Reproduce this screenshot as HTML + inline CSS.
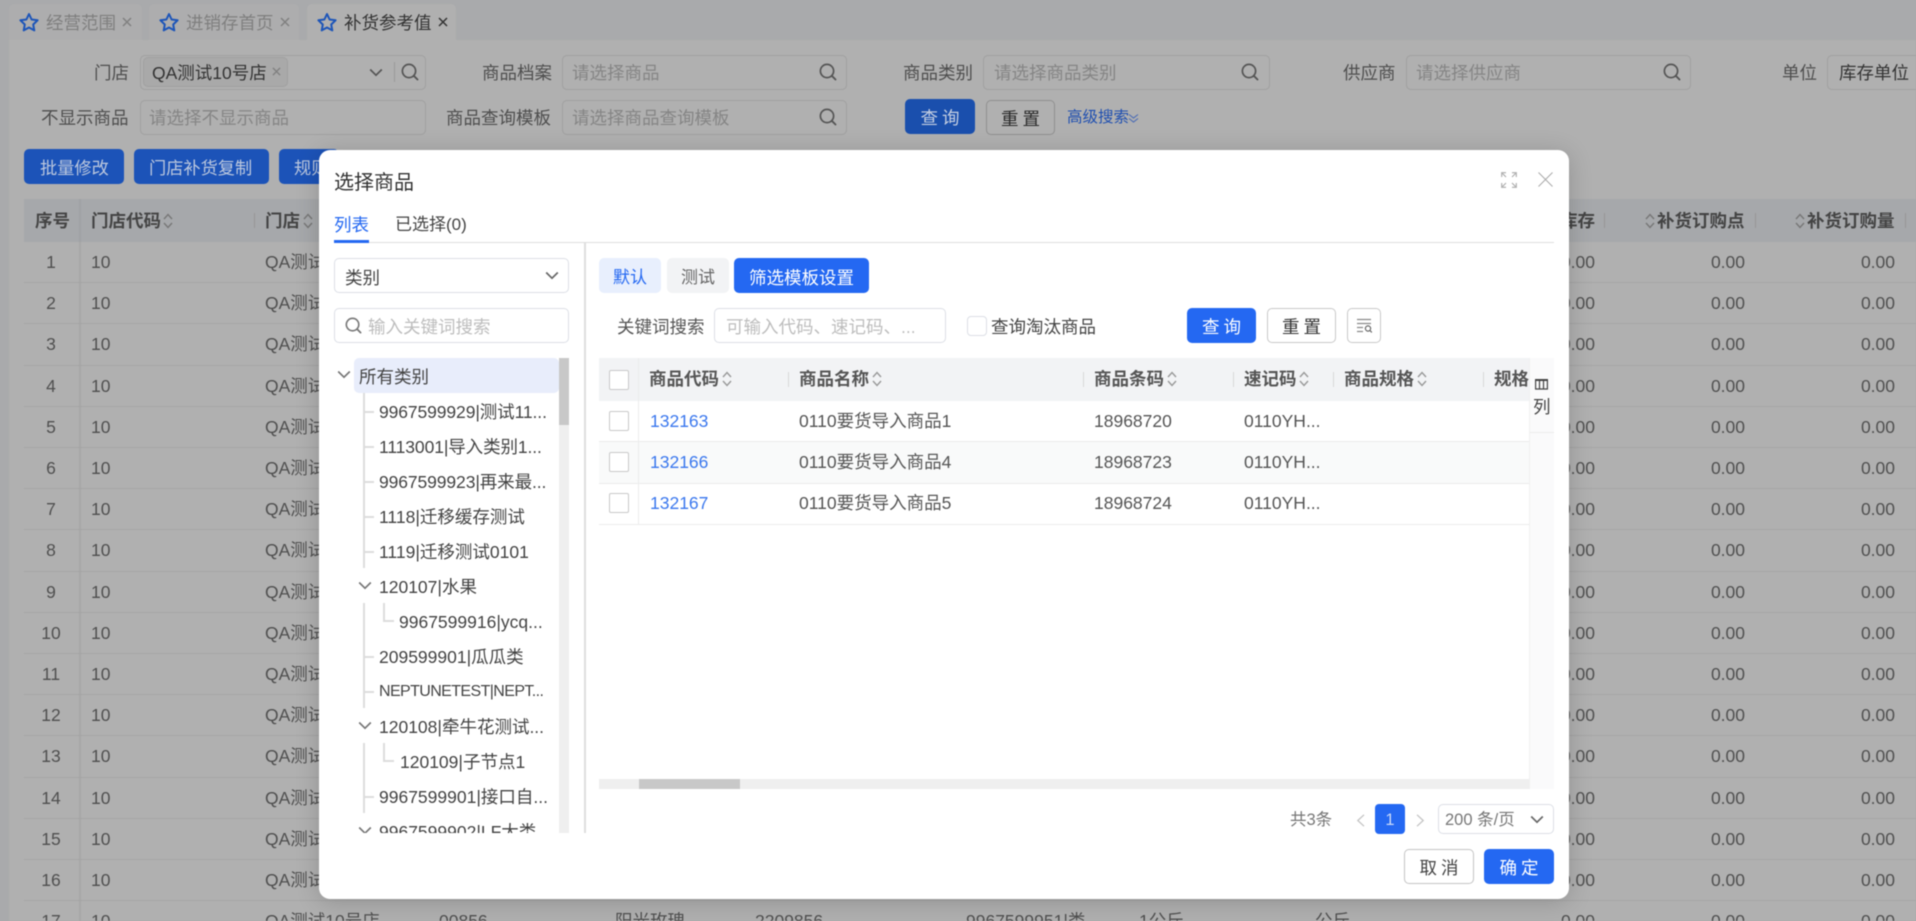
<!DOCTYPE html>
<html lang="zh-CN">
<head>
<meta charset="utf-8">
<title>补货参考值</title>
<style>
html,body{margin:0;padding:0;width:1916px;height:921px;overflow:hidden;background:#a9aaac}
#root{position:absolute;left:0;top:0;width:1916px;height:921px;overflow:hidden;filter:blur(.4px);font-family:"Liberation Sans","Noto Sans CJK SC",sans-serif;font-size:17.5px;color:#4e4e4e}
.b{position:absolute;box-sizing:border-box}
.t{position:absolute;white-space:nowrap;line-height:24px;height:24px}
svg{position:absolute;overflow:visible}
.inp{position:absolute;box-sizing:border-box;border:1.5px solid #a0a0a0;border-radius:5px;height:35px}
.ph{color:#858585}
.lab{color:#4e4e4e}
.bd{font-weight:700}
.r{position:absolute;left:24px;width:1892px;height:41.2px;box-sizing:border-box;border-bottom:1.5px solid #a5a5a5}
.r .t{top:8px;color:#505050}
.r i{position:absolute;left:55px;top:0;bottom:0;width:1.5px;background:#a7a7a7}
.n{text-align:center;width:54px;left:0}
.v{text-align:right;width:100px}
.mi{border:1.5px solid #dcdfe6;border-radius:5px;position:absolute;box-sizing:border-box;background:#fff}
.tr{color:#444}
.tl{position:absolute;background:#dcdcdc}
.cb{position:absolute;box-sizing:border-box;width:20px;height:20px;border:1.5px solid #c9c9c9;border-radius:2px;background:#fff}
.cell{color:#555}
</style>
</head>
<body>
<div id="root">
<svg width="0" height="0" style="position:absolute">
<defs>
<symbol id="star" viewBox="0 0 20 20"><path d="M10 2 12.6 7.5 18.6 8.3 14.2 12.5 15.3 18.4 10 15.5 4.7 18.4 5.8 12.5 1.4 8.3 7.4 7.5Z" fill="none" stroke="#1d55b8" stroke-width="2" stroke-linejoin="round"/></symbol>
<symbol id="sr" viewBox="0 0 18 18"><circle cx="8" cy="8" r="6.6" fill="none" stroke="currentColor" stroke-width="1.7"/><path d="M12.8 12.8 16.5 16.5" stroke="currentColor" stroke-width="1.9" fill="none" stroke-linecap="round"/></symbol>
<symbol id="sort" viewBox="0 0 10 18"><path d="M1 7 5 2.5 9 7M1 11 5 15.5 9 11" fill="none" stroke="currentColor" stroke-width="1.4"/></symbol>
<symbol id="chev" viewBox="0 0 14 9"><path d="M1.2 1.5 7 7.2 12.8 1.5" fill="none" stroke="currentColor" stroke-width="1.7"/></symbol>
<symbol id="x" viewBox="0 0 10 10"><path d="M1 1 9 9M9 1 1 9" fill="none" stroke="currentColor" stroke-width="1.5"/></symbol>
</defs>
</svg>

<!-- page background -->
<div class="b" style="left:9px;top:40px;width:1907px;height:881px;background:#b0b0b0"></div>
<div class="b" style="left:9px;top:4px;width:133px;height:36px;background:#adadae;border-radius:5px 5px 0 0"></div>
<div class="b" style="left:149px;top:4px;width:150px;height:36px;background:#adadae;border-radius:5px 5px 0 0"></div>
<div class="b" style="left:307px;top:4px;width:149px;height:36px;background:#b0b0b0;border-radius:5px 5px 0 0"></div>

<svg style="left:19px;top:12px" width="20" height="20"><use href="#star"/></svg>
<div class="t" style="left:46px;top:11px;color:#7f7f7f">经营范围</div>
<svg style="left:122px;top:17px;color:#808080" width="10" height="10"><use href="#x"/></svg>
<svg style="left:159px;top:12px" width="20" height="20"><use href="#star"/></svg>
<div class="t" style="left:186px;top:11px;color:#7f7f7f">进销存首页</div>
<svg style="left:280px;top:17px;color:#808080" width="10" height="10"><use href="#x"/></svg>
<svg style="left:317px;top:12px" width="20" height="20"><use href="#star"/></svg>
<div class="t" style="left:344px;top:11px;color:#333">补货参考值</div>
<svg style="left:438px;top:17px;color:#333" width="10" height="10"><use href="#x"/></svg>

<!-- filters row 1 -->
<div class="t lab" style="left:94px;top:61px">门店</div>
<div class="inp" style="left:140px;top:55px;width:286px"></div>
<div class="b" style="left:143px;top:57px;width:145px;height:30px;background:#a9a9a9;border:1.5px solid #a0a0a0;border-radius:5px"></div>
<div class="t" style="left:152px;top:61px;color:#333">QA测试10号店</div>
<svg style="left:272px;top:67px;color:#808080" width="9" height="9"><use href="#x"/></svg>
<svg style="left:369px;top:68px;color:#555" width="14" height="9"><use href="#chev"/></svg>
<div class="b" style="left:394px;top:62px;width:1px;height:20px;background:#999"></div>
<svg style="left:401px;top:63px;color:#555" width="18" height="18"><use href="#sr"/></svg>

<div class="t lab" style="left:482px;top:61px">商品档案</div>
<div class="inp" style="left:562px;top:55px;width:285px"></div>
<div class="t ph" style="left:572px;top:61px">请选择商品</div>
<svg style="left:819px;top:63px;color:#555" width="18" height="18"><use href="#sr"/></svg>

<div class="t lab" style="left:903px;top:61px">商品类别</div>
<div class="inp" style="left:983px;top:55px;width:287px"></div>
<div class="t ph" style="left:994px;top:61px">请选择商品类别</div>
<svg style="left:1241px;top:63px;color:#555" width="18" height="18"><use href="#sr"/></svg>

<div class="t lab" style="left:1343px;top:61px">供应商</div>
<div class="inp" style="left:1406px;top:55px;width:285px"></div>
<div class="t ph" style="left:1416px;top:61px">请选择供应商</div>
<svg style="left:1663px;top:63px;color:#555" width="18" height="18"><use href="#sr"/></svg>

<div class="t lab" style="left:1782px;top:61px">单位</div>
<div class="inp" style="left:1827px;top:55px;width:100px"></div>
<div class="t" style="left:1839px;top:61px;color:#333">库存单位</div>

<!-- filters row 2 -->
<div class="t lab" style="left:41px;top:106px">不显示商品</div>
<div class="inp" style="left:140px;top:100px;width:286px"></div>
<div class="t ph" style="left:149px;top:106px">请选择不显示商品</div>

<div class="t lab" style="left:446px;top:106px">商品查询模板</div>
<div class="inp" style="left:562px;top:100px;width:285px"></div>
<div class="t ph" style="left:572px;top:106px">请选择商品查询模板</div>
<svg style="left:819px;top:108px;color:#555" width="18" height="18"><use href="#sr"/></svg>

<div class="b" style="left:905px;top:99px;width:70px;height:35px;background:#1a4fad;border-radius:5px"></div>
<div class="t" style="left:905px;top:106px;width:70px;text-align:center;color:#c6d0e2;letter-spacing:4px;text-indent:4px">查询</div>
<div class="b" style="left:986px;top:100px;width:69px;height:35px;border:1.5px solid #909090;border-radius:5px"></div>
<div class="t" style="left:986px;top:107px;width:69px;text-align:center;color:#2a2a2a;letter-spacing:4px;text-indent:4px">重置</div>
<div class="t" style="left:1067px;top:106px;color:#1f4fb0;font-size:15.5px">高级搜索</div>
<svg style="left:1128px;top:113px" width="11" height="11"><path d="M1 1.5 5.5 5 10 1.5M1 5.5 5.5 9 10 5.5" fill="none" stroke="#4a6bb5" stroke-width="1.1"/></svg>

<!-- action buttons -->
<div class="b" style="left:24px;top:149px;width:100px;height:35px;background:#1c53b8;border-radius:5px"></div>
<div class="t" style="left:40px;top:156px;color:#bcc8de;font-size:17.2px">批量修改</div>
<div class="b" style="left:134px;top:149px;width:135px;height:35px;background:#1c53b8;border-radius:5px"></div>
<div class="t" style="left:149px;top:156px;color:#bcc8de;font-size:17.2px">门店补货复制</div>
<div class="b" style="left:279px;top:149px;width:60px;height:35px;background:#1c53b8;border-radius:5px"></div>
<div class="t" style="left:294px;top:156px;color:#bcc8de;font-size:17.2px">规则</div>

<!-- main table header -->
<div class="b" style="left:24px;top:199px;width:1892px;height:43px;background:#a6a8ab"></div>
<div class="b" style="left:79px;top:199px;width:1.5px;height:43px;background:#a0a2a5"></div>
<div class="t bd" style="left:35px;top:209px;color:#444">序号</div>
<div class="t bd" style="left:91px;top:209px;color:#444">门店代码</div>
<svg style="left:163px;top:212px;color:#777" width="10" height="18"><use href="#sort"/></svg>
<div class="b" style="left:254px;top:213px;width:1px;height:15px;background:#969696"></div>
<div class="t bd" style="left:265px;top:209px;color:#444">门店</div>
<svg style="left:303px;top:212px;color:#777" width="10" height="18"><use href="#sort"/></svg>
<div class="t bd" style="left:1560px;top:209px;color:#444">库存</div>
<div class="b" style="left:1604px;top:213px;width:1px;height:15px;background:#969696"></div>
<svg style="left:1645px;top:212px;color:#777" width="10" height="18"><use href="#sort"/></svg>
<div class="t bd" style="left:1657px;top:209px;color:#444">补货订购点</div>
<div class="b" style="left:1755px;top:213px;width:1px;height:15px;background:#969696"></div>
<svg style="left:1795px;top:212px;color:#777" width="10" height="18"><use href="#sort"/></svg>
<div class="t bd" style="left:1807px;top:209px;color:#444">补货订购量</div>
<div class="b" style="left:1905px;top:213px;width:1px;height:15px;background:#969696"></div>

<!-- main table rows -->
<div class="r" style="top:242px"><i></i><div class="t n">1</div><div class="t" style="left:67px">10</div><div class="t" style="left:241px">QA测试10号店</div><div class="t v" style="left:1471px">0.00</div><div class="t v" style="left:1621px">0.00</div><div class="t v" style="left:1771px">0.00</div></div>
<div class="r" style="top:283.2px"><i></i><div class="t n">2</div><div class="t" style="left:67px">10</div><div class="t" style="left:241px">QA测试10号店</div><div class="t v" style="left:1471px">0.00</div><div class="t v" style="left:1621px">0.00</div><div class="t v" style="left:1771px">0.00</div></div>
<div class="r" style="top:324.4px"><i></i><div class="t n">3</div><div class="t" style="left:67px">10</div><div class="t" style="left:241px">QA测试10号店</div><div class="t v" style="left:1471px">0.00</div><div class="t v" style="left:1621px">0.00</div><div class="t v" style="left:1771px">0.00</div></div>
<div class="r" style="top:365.6px"><i></i><div class="t n">4</div><div class="t" style="left:67px">10</div><div class="t" style="left:241px">QA测试10号店</div><div class="t v" style="left:1471px">0.00</div><div class="t v" style="left:1621px">0.00</div><div class="t v" style="left:1771px">0.00</div></div>
<div class="r" style="top:406.8px"><i></i><div class="t n">5</div><div class="t" style="left:67px">10</div><div class="t" style="left:241px">QA测试10号店</div><div class="t v" style="left:1471px">0.00</div><div class="t v" style="left:1621px">0.00</div><div class="t v" style="left:1771px">0.00</div></div>
<div class="r" style="top:448px"><i></i><div class="t n">6</div><div class="t" style="left:67px">10</div><div class="t" style="left:241px">QA测试10号店</div><div class="t v" style="left:1471px">0.00</div><div class="t v" style="left:1621px">0.00</div><div class="t v" style="left:1771px">0.00</div></div>
<div class="r" style="top:489.2px"><i></i><div class="t n">7</div><div class="t" style="left:67px">10</div><div class="t" style="left:241px">QA测试10号店</div><div class="t v" style="left:1471px">0.00</div><div class="t v" style="left:1621px">0.00</div><div class="t v" style="left:1771px">0.00</div></div>
<div class="r" style="top:530.4px"><i></i><div class="t n">8</div><div class="t" style="left:67px">10</div><div class="t" style="left:241px">QA测试10号店</div><div class="t v" style="left:1471px">0.00</div><div class="t v" style="left:1621px">0.00</div><div class="t v" style="left:1771px">0.00</div></div>
<div class="r" style="top:571.6px"><i></i><div class="t n">9</div><div class="t" style="left:67px">10</div><div class="t" style="left:241px">QA测试10号店</div><div class="t v" style="left:1471px">0.00</div><div class="t v" style="left:1621px">0.00</div><div class="t v" style="left:1771px">0.00</div></div>
<div class="r" style="top:612.8px"><i></i><div class="t n">10</div><div class="t" style="left:67px">10</div><div class="t" style="left:241px">QA测试10号店</div><div class="t v" style="left:1471px">0.00</div><div class="t v" style="left:1621px">0.00</div><div class="t v" style="left:1771px">0.00</div></div>
<div class="r" style="top:654px"><i></i><div class="t n">11</div><div class="t" style="left:67px">10</div><div class="t" style="left:241px">QA测试10号店</div><div class="t v" style="left:1471px">0.00</div><div class="t v" style="left:1621px">0.00</div><div class="t v" style="left:1771px">0.00</div></div>
<div class="r" style="top:695.2px"><i></i><div class="t n">12</div><div class="t" style="left:67px">10</div><div class="t" style="left:241px">QA测试10号店</div><div class="t v" style="left:1471px">0.00</div><div class="t v" style="left:1621px">0.00</div><div class="t v" style="left:1771px">0.00</div></div>
<div class="r" style="top:736.4px"><i></i><div class="t n">13</div><div class="t" style="left:67px">10</div><div class="t" style="left:241px">QA测试10号店</div><div class="t v" style="left:1471px">0.00</div><div class="t v" style="left:1621px">0.00</div><div class="t v" style="left:1771px">0.00</div></div>
<div class="r" style="top:777.6px"><i></i><div class="t n">14</div><div class="t" style="left:67px">10</div><div class="t" style="left:241px">QA测试10号店</div><div class="t v" style="left:1471px">0.00</div><div class="t v" style="left:1621px">0.00</div><div class="t v" style="left:1771px">0.00</div></div>
<div class="r" style="top:818.8px"><i></i><div class="t n">15</div><div class="t" style="left:67px">10</div><div class="t" style="left:241px">QA测试10号店</div><div class="t v" style="left:1471px">0.00</div><div class="t v" style="left:1621px">0.00</div><div class="t v" style="left:1771px">0.00</div></div>
<div class="r" style="top:860px"><i></i><div class="t n">16</div><div class="t" style="left:67px">10</div><div class="t" style="left:241px">QA测试10号店</div><div class="t v" style="left:1471px">0.00</div><div class="t v" style="left:1621px">0.00</div><div class="t v" style="left:1771px">0.00</div></div>
<div class="r" style="top:901.2px"><i></i><div class="t n">17</div><div class="t" style="left:67px">10</div><div class="t" style="left:241px">QA测试10号店</div><div class="t" style="left:415px">00856</div><div class="t" style="left:591px">阳光玫瑰</div><div class="t" style="left:731px">2209856</div><div class="t" style="left:942px">9967599951|类</div><div class="t" style="left:1115px">1公斤</div><div class="t" style="left:1291px">公斤</div><div class="t v" style="left:1471px">0.00</div><div class="t v" style="left:1621px">0.00</div><div class="t v" style="left:1771px">0.00</div></div>

<!-- modal -->
<div class="b" style="left:319px;top:150px;width:1250px;height:749px;background:#fff;border-radius:11px;box-shadow:0 3px 24px rgba(0,0,0,.18)"></div>
<div class="t" style="left:334px;top:171px;font-size:20px;color:#333">选择商品</div>
<svg style="left:1501px;top:172px" width="16" height="16"><path d="M0.7 5V0.7H5M11 0.7H15.3V5M0.7 11V15.3H5M11 15.3H15.3V11M1.5 1.5 5 5M14.5 1.5 11 5M1.5 14.5 5 11M14.5 14.5 11 11" fill="none" stroke="#aaa" stroke-width="1.1"/></svg>
<svg style="left:1538px;top:172px" width="15" height="15"><path d="M0.5 0.5 14.5 14.5M14.5 0.5 0.5 14.5" fill="none" stroke="#aaa" stroke-width="1"/></svg>

<div class="t" style="left:334px;top:213px;color:#2468f2">列表</div>
<div class="t" style="left:395px;top:213px;color:#444;font-size:17px">已选择(0)</div>
<div class="b" style="left:334px;top:241.5px;width:1220px;height:1.5px;background:#dedede"></div>
<div class="b" style="left:334px;top:240px;width:35px;height:2.5px;background:#2468f2"></div>
<div class="b" style="left:584px;top:243px;width:1.5px;height:590px;background:#dedede"></div>

<!-- left pane -->
<div class="mi" style="left:334px;top:258px;width:235px;height:35px"></div>
<div class="t" style="left:345px;top:265.5px;color:#444">类别</div>
<svg style="left:545px;top:271px;color:#666" width="14" height="9"><use href="#chev"/></svg>
<div class="mi" style="left:334px;top:308px;width:235px;height:35px"></div>
<svg style="left:345px;top:317px;color:#777" width="17" height="17"><use href="#sr"/></svg>
<div class="t" style="left:368px;top:315px;color:#bdbdbd">输入关键词搜索</div>

<div class="b" style="left:354px;top:358px;width:205px;height:35px;background:#e8edfb;border-radius:5px"></div>
<div class="b" style="left:559px;top:358px;width:10px;height:475px;background:#efefef"></div>
<div class="b" style="left:559px;top:358px;width:10px;height:67px;background:#c8c8c8"></div>

<!-- tree -->
<div class="b" style="left:0;top:0;width:1916px;height:921px;clip-path:inset(358px 1357px 88px 334px)">
<svg style="left:337px;top:370px;color:#777" width="14" height="9"><use href="#chev"/></svg>
<div class="t tr" style="left:359px;top:365px">所有类别</div>

<div class="tl" style="left:363px;top:393px;width:1.5px;height:175px"></div>
<div class="tl" style="left:363px;top:411px;width:11px;height:1.5px"></div>
<div class="t tr" style="left:379px;top:400px;letter-spacing:-.1px">9967599929|测试11...</div>
<div class="tl" style="left:363px;top:446px;width:11px;height:1.5px"></div>
<div class="t tr" style="left:379px;top:435px;letter-spacing:-.1px">1113001|导入类别1...</div>
<div class="tl" style="left:363px;top:481px;width:11px;height:1.5px"></div>
<div class="t tr" style="left:379px;top:470px;letter-spacing:-.1px">9967599923|再来最...</div>
<div class="tl" style="left:363px;top:516px;width:11px;height:1.5px"></div>
<div class="t tr" style="left:379px;top:505px">1118|迁移缓存测试</div>
<div class="tl" style="left:363px;top:551px;width:11px;height:1.5px"></div>
<div class="t tr" style="left:379px;top:540px">1119|迁移测试0101</div>

<svg style="left:358px;top:581px;color:#777" width="14" height="9"><use href="#chev"/></svg>
<div class="t tr" style="left:379px;top:575px">120107|水果</div>
<div class="tl" style="left:383px;top:603px;width:1.5px;height:18px"></div>
<div class="tl" style="left:383px;top:620px;width:11px;height:1.5px"></div>
<div class="t tr" style="left:399px;top:610px">9967599916|ycq...</div>

<div class="tl" style="left:363px;top:603px;width:1.5px;height:105px"></div>
<div class="tl" style="left:363px;top:656px;width:11px;height:1.5px"></div>
<div class="t tr" style="left:379px;top:645px">209599901|瓜瓜类</div>
<div class="tl" style="left:363px;top:691px;width:11px;height:1.5px"></div>
<div class="t tr" style="left:379px;top:680px;font-size:16px;letter-spacing:-.6px">NEPTUNETEST|NEPT...</div>

<svg style="left:358px;top:721px;color:#777" width="14" height="9"><use href="#chev"/></svg>
<div class="t tr" style="left:379px;top:715px">120108|牵牛花测试...</div>
<div class="tl" style="left:383px;top:743px;width:1.5px;height:18px"></div>
<div class="tl" style="left:383px;top:760px;width:11px;height:1.5px"></div>
<div class="t tr" style="left:400px;top:750px">120109|子节点1</div>

<div class="tl" style="left:363px;top:743px;width:1.5px;height:70px"></div>
<div class="tl" style="left:363px;top:796px;width:11px;height:1.5px"></div>
<div class="t tr" style="left:379px;top:785px">9967599901|接口自...</div>

<svg style="left:358px;top:826px;color:#777" width="14" height="9"><use href="#chev"/></svg>
<div class="t tr" style="left:379px;top:820px">9967599902|LF大类</div>
</div>

<!-- right pane top -->
<div class="b" style="left:599px;top:258px;width:62px;height:35px;background:#e8effd;border-radius:5px"></div>
<div class="t" style="left:599px;top:265.5px;width:62px;text-align:center;color:#2468f2;font-size:17px">默认</div>
<div class="b" style="left:667px;top:258px;width:62px;height:35px;background:#f2f3f5;border-radius:5px"></div>
<div class="t" style="left:667px;top:265.5px;width:62px;text-align:center;color:#666;font-size:17px">测试</div>
<div class="b" style="left:734px;top:258px;width:135px;height:35px;background:#2468f2;border-radius:5px"></div>
<div class="t" style="left:734px;top:265.5px;width:135px;text-align:center;color:#fff">筛选模板设置</div>

<div class="t" style="left:617px;top:315px;color:#555">关键词搜索</div>
<div class="mi" style="left:714px;top:308px;width:232px;height:35px"></div>
<div class="t" style="left:726px;top:315px;color:#bdbdbd">可输入代码、速记码、...</div>
<div class="cb" style="left:967px;top:316px;border-color:#dcdfe6;border-radius:4px"></div>
<div class="t" style="left:991px;top:315px;color:#444">查询淘汰商品</div>

<div class="b" style="left:1187px;top:308px;width:69px;height:35px;background:#2468f2;border-radius:5px"></div>
<div class="t" style="left:1187px;top:315px;width:69px;text-align:center;color:#fff;letter-spacing:4px;text-indent:4px">查询</div>
<div class="mi" style="left:1267px;top:308px;width:69px;height:35px;border-color:#c9c9c9"></div>
<div class="t" style="left:1267px;top:315px;width:69px;text-align:center;color:#333;letter-spacing:4px;text-indent:4px">重置</div>
<div class="mi" style="left:1347px;top:308px;width:34px;height:35px;border-color:#c9c9c9"></div>
<svg style="left:1356px;top:318px" width="17" height="16"><path d="M1 1.5H15M1 5.5H15M1 9.5H7M1 13.5H7" fill="none" stroke="#888" stroke-width="1.2"/><circle cx="12" cy="10.5" r="2.6" fill="none" stroke="#666" stroke-width="1.2"/><path d="M14 12.5 15.8 14.4" stroke="#666" stroke-width="1.2"/></svg>

<!-- right table -->
<div class="b" style="left:599px;top:358px;width:930px;height:43px;background:#f2f3f5"></div>
<div class="b" style="left:599px;top:442px;width:930px;height:41px;background:#f9fafa"></div>
<div class="b" style="left:599px;top:441px;width:930px;height:1px;background:#ececec"></div>
<div class="b" style="left:599px;top:483px;width:930px;height:1px;background:#ececec"></div>
<div class="b" style="left:599px;top:524px;width:930px;height:1px;background:#ececec"></div>
<div class="b" style="left:638px;top:358px;width:1px;height:166px;background:#ececec"></div>

<div class="cb" style="left:609px;top:370px"></div>
<div class="cb" style="left:609px;top:411px"></div>
<div class="cb" style="left:609px;top:452px"></div>
<div class="cb" style="left:609px;top:493px"></div>

<div class="t bd" style="left:649px;top:367px;color:#555">商品代码</div>
<svg style="left:722px;top:370px;color:#999" width="10" height="18"><use href="#sort"/></svg>
<div class="b" style="left:788px;top:372px;width:1px;height:15px;background:#d8d8d8"></div>
<div class="t bd" style="left:799px;top:367px;color:#555">商品名称</div>
<svg style="left:872px;top:370px;color:#999" width="10" height="18"><use href="#sort"/></svg>
<div class="b" style="left:1083px;top:372px;width:1px;height:15px;background:#d8d8d8"></div>
<div class="t bd" style="left:1094px;top:367px;color:#555">商品条码</div>
<svg style="left:1167px;top:370px;color:#999" width="10" height="18"><use href="#sort"/></svg>
<div class="b" style="left:1233px;top:372px;width:1px;height:15px;background:#d8d8d8"></div>
<div class="t bd" style="left:1244px;top:367px;color:#555">速记码</div>
<svg style="left:1299px;top:370px;color:#999" width="10" height="18"><use href="#sort"/></svg>
<div class="b" style="left:1333px;top:372px;width:1px;height:15px;background:#d8d8d8"></div>
<div class="t bd" style="left:1344px;top:367px;color:#555">商品规格</div>
<svg style="left:1417px;top:370px;color:#999" width="10" height="18"><use href="#sort"/></svg>
<div class="b" style="left:1483px;top:372px;width:1px;height:15px;background:#d8d8d8"></div>
<div class="t bd" style="left:1494px;top:367px;color:#555">规格</div>

<div class="t" style="left:650px;top:409px;color:#3b78ee">132163</div>
<div class="t cell" style="left:799px;top:409px">0110要货导入商品1</div>
<div class="t cell" style="left:1094px;top:409px">18968720</div>
<div class="t cell" style="left:1244px;top:409px">0110YH...</div>
<div class="t" style="left:650px;top:450px;color:#3b78ee">132166</div>
<div class="t cell" style="left:799px;top:450px">0110要货导入商品4</div>
<div class="t cell" style="left:1094px;top:450px">18968723</div>
<div class="t cell" style="left:1244px;top:450px">0110YH...</div>
<div class="t" style="left:650px;top:491px;color:#3b78ee">132167</div>
<div class="t cell" style="left:799px;top:491px">0110要货导入商品5</div>
<div class="t cell" style="left:1094px;top:491px">18968724</div>
<div class="t cell" style="left:1244px;top:491px">0110YH...</div>

<!-- column panel -->
<div class="b" style="left:1529px;top:358px;width:25px;height:431px;background:#fafafb;border-left:1px solid #f0f0f0"></div>
<div class="b" style="left:1530px;top:432px;width:24px;height:1px;background:#ececec"></div>
<svg style="left:1535px;top:379px" width="13" height="11"><path d="M0.6 1H12.4V10H0.6ZM4.5 1V10M8.5 1V10" fill="none" stroke="#444" stroke-width="1.2"/><path d="M0 1H13" stroke="#444" stroke-width="2"/></svg>
<div class="t" style="left:1533px;top:395px;color:#444">列</div>

<!-- horizontal scrollbar -->
<div class="b" style="left:599px;top:779px;width:930px;height:10px;background:#efefef"></div>
<div class="b" style="left:639px;top:779px;width:101px;height:10px;background:#c8c8c8"></div>

<!-- pagination -->
<div class="t" style="left:1290px;top:808px;color:#777;font-size:16.5px">共3条</div>
<svg style="left:1356px;top:814px" width="9" height="13"><path d="M8 .8 1.8 6.5 8 12.2" fill="none" stroke="#c4c4c4" stroke-width="1.3"/></svg>
<div class="b" style="left:1375px;top:804px;width:30px;height:30px;background:#2468f2;border-radius:4px"></div>
<div class="t" style="left:1375px;top:808px;width:30px;text-align:center;color:#c8d8f8;font-size:16.5px">1</div>
<svg style="left:1416px;top:814px" width="9" height="13"><path d="M1 .8 7.2 6.5 1 12.2" fill="none" stroke="#c4c4c4" stroke-width="1.3"/></svg>
<div class="mi" style="left:1438px;top:804px;width:116px;height:30px"></div>
<div class="t" style="left:1445px;top:808px;color:#777;font-size:16.5px">200 条/页</div>
<svg style="left:1530px;top:815px;color:#666" width="14" height="9"><use href="#chev"/></svg>

<!-- footer buttons -->
<div class="mi" style="left:1404px;top:849px;width:70px;height:35px;border-color:#c4c4c4"></div>
<div class="t" style="left:1404px;top:856px;width:70px;text-align:center;color:#444;letter-spacing:4px;text-indent:4px">取消</div>
<div class="b" style="left:1484px;top:849px;width:70px;height:35px;background:#2468f2;border-radius:5px"></div>
<div class="t" style="left:1484px;top:856px;width:70px;text-align:center;color:#fff;letter-spacing:4px;text-indent:4px">确定</div>
</div>
</body>
</html>
